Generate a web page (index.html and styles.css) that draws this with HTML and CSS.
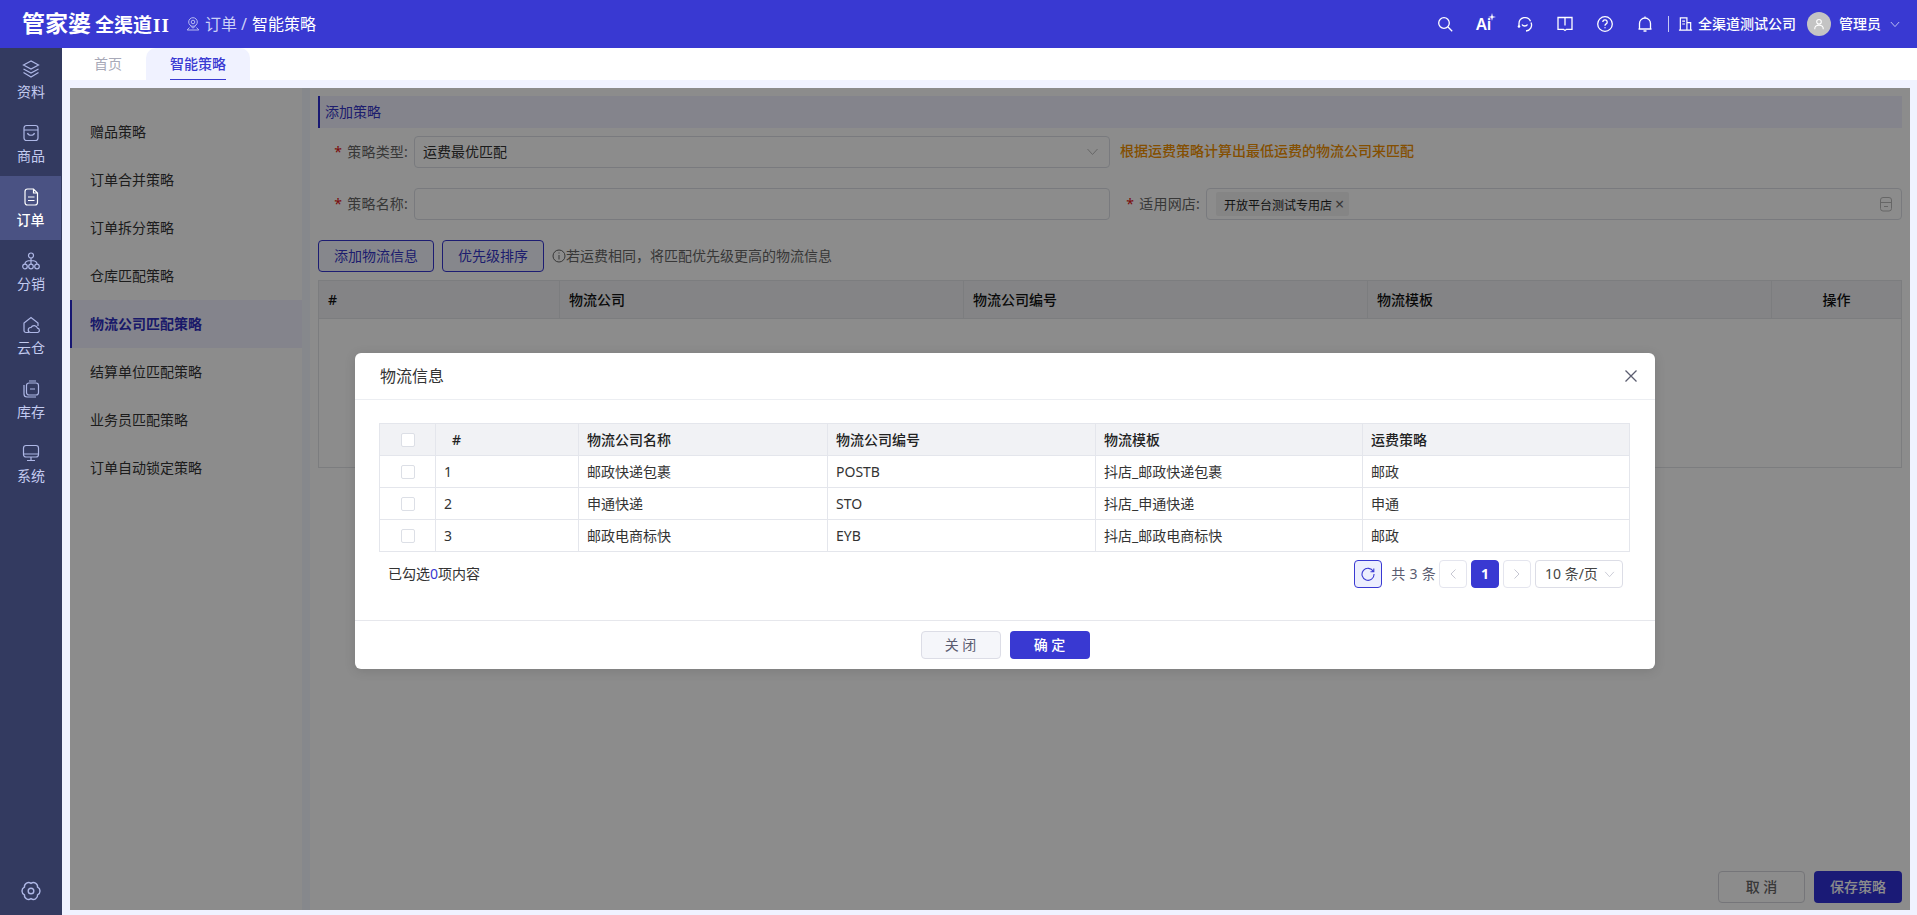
FILE: index.html
```html
<!DOCTYPE html>
<html lang="zh-CN">
<head>
    <meta charset="UTF-8">
    <meta name="viewport" content="width=device-width, initial-scale=1.0">
    <title>智能策略</title>
    <link rel="stylesheet" href="styles.css">
</head>
<body>
    <header class="topbar">
        <div class="logo"><span class="logo-main">管家婆</span><span class="logo-sub">全渠道</span><span class="logo-ver">II</span></div>
        <div class="crumb">
            <svg class="crumb-pin" viewBox="0 0 14 14"><circle cx="7" cy="5" r="4.3"/><circle cx="7" cy="5" r="1.8"/><path d="M4.5 9 7 11.2 9.5 9M3.5 10.5 1.2 13h11.6l-2.3-2.5"/></svg>
            <span class="crumb-parent">订单</span><span class="crumb-sep">/</span><span class="crumb-current">智能策略</span>
        </div>
        <div class="top-tools">
            <svg class="tool" viewBox="0 0 18 18"><circle cx="8" cy="8" r="5.3"/><path d="m12 12 4.2 4.2"/></svg>
            <span class="tool-ai">Ai<svg viewBox="0 0 10 10"><path class="fill" d="M5 0 6 4 10 5 6 6 5 10 4 6 0 5 4 4z"/></svg></span>
            <svg class="tool" viewBox="0 0 18 18"><path d="M3 11V8.500a6 6 0 0 1 11.500-2.300M15 7.500a6 6 0 0 1-5 8.500"/><path d="M6 9.500c1 2 4.500 2 5.500 0"/><circle class="fill" cx="3" cy="11.500" r="1.300"/></svg>
            <svg class="tool" viewBox="0 0 18 18"><path d="M2 2.500h14v11.800h-5.500L9 15.500l-1.500-1.200H2zM9 2.500v8"/></svg>
            <svg class="tool" viewBox="0 0 18 18"><circle cx="9" cy="9" r="7.300"/><path d="M6.800 7a2.200 2.200 0 1 1 3.400 1.900c-.8.500-1.200 1-1.200 1.900M9 12.300v1"/></svg>
            <svg class="tool" viewBox="0 0 18 18"><path d="M3.500 14V8.500a5.500 5.500 0 0 1 11 0V14zM2.500 14h13M7.500 16h3M9 1.500V3"/></svg>
            <span class="tool-line"></span>
            <svg class="tool-building" viewBox="0 0 16 16"><path d="M2.500 14.500V1.500h7v13M9.500 6.500h4v8M1 14.500h14M4.500 5h3M4.500 8h3"/></svg>
            <span class="company">全渠道测试公司</span>
            <span class="avatar"><svg viewBox="0 0 14 14"><circle cx="7" cy="4.500" r="2.700"/><path d="M2 13c0-6 10-6 10 0"/></svg></span>
            <span class="user">管理员</span>
            <svg class="tool-chevron" viewBox="0 0 12 8"><path d="m1 1 5 5.500L11 1"/></svg>
        </div>
    </header>

    <div class="shell">
        <nav class="sidebar">
            <a class="side-item"><svg viewBox="0 0 20 20"><path d="M10 2 2.500 6 10 10l7.500-4zM2.500 10 10 14l7.500-4M2.500 13.500 10 18l7.500-4.500"/></svg>资料</a>
            <a class="side-item"><svg viewBox="0 0 20 20"><rect x="3" y="2.500" width="14" height="15" rx="2.500"/><path d="M3 7h14M6.500 10c1 3 6 3 7 0"/></svg>商品</a>
            <a class="side-item active"><svg viewBox="0 0 20 20"><path d="M4 4.500a2.500 2.500 0 0 1 2.500-2.500h6l4 4v9.500a2.500 2.500 0 0 1-2.500 2.500h-7.500a2.500 2.500 0 0 1-2.500-2.500zM7 10h6.500M7 13.500h6.500M12.500 2.500v3.500h3.500"/></svg>订单</a>
            <a class="side-item"><svg viewBox="0 0 20 20"><circle cx="10" cy="4.500" r="2.500"/><circle cx="4" cy="15.500" r="2.300"/><circle cx="10" cy="15.500" r="2.300"/><circle cx="16" cy="15.500" r="2.300"/><path d="M10 7v6M4 13c0-3 2-3.500 6-3.500s6 .5 6 3.500"/></svg>分销</a>
            <a class="side-item"><svg viewBox="0 0 20 20"><path d="M8 17.500H5a2 2 0 0 1-2-2V8l7-5.500L17 8v3"/><path d="M9.500 17.500a2.500 2.500 0 0 1 .5-5 3.500 3.500 0 0 1 6.500.7 2.200 2.200 0 0 1 .3 4.300z"/></svg>云仓</a>
            <a class="side-item"><svg viewBox="0 0 20 20"><path d="M3 6v9a3 3 0 0 0 3 3h9"/><rect x="5.500" y="4" width="12" height="12" rx="2.500"/><path d="M8 2h7M9 10h5"/></svg>库存</a>
            <a class="side-item"><svg viewBox="0 0 20 20"><rect x="2.500" y="2.500" width="15" height="11.500" rx="2.500"/><path d="M3 11h14M10 14v3M6 17.500h8"/></svg>系统</a>
            <a class="side-gear"><svg viewBox="0 0 20 20"><path d="M10 2.400A4.200 4.200 0 0 1 16.600 6.200 4.200 4.200 0 0 1 16.600 13.800 4.200 4.200 0 0 1 10 17.600 4.200 4.200 0 0 1 3.400 13.800 4.200 4.200 0 0 1 3.400 6.200 4.200 4.200 0 0 1 10 2.400z"/><circle cx="10" cy="10" r="2.800"/></svg></a>
        </nav>

        <div class="main">
            <div class="tabs">
                <a class="tab">首页</a>
                <a class="tab tab-on"><span>智能策略</span></a>
            </div>
            <div class="content">
                <div class="frame">
                    <ul class="menu">
                        <li>赠品策略</li>
                        <li>订单合并策略</li>
                        <li>订单拆分策略</li>
                        <li>仓库匹配策略</li>
                        <li class="menu-on">物流公司匹配策略</li>
                        <li>结算单位匹配策略</li>
                        <li>业务员匹配策略</li>
                        <li>订单自动锁定策略</li>
                    </ul>
                    <section class="panel">
                        <div class="panel-title">添加策略</div>
                        <div class="form-grid">
                            <div class="form-item">
                                <label class="form-label"><i>*</i>策略类型:</label>
                                <div class="field field-select">运费最优匹配
                                    <svg viewBox="0 0 12 8"><path d="m1 1 5 5.500L11 1"/></svg>
                                </div>
                            </div>
                            <div class="form-hint">根据运费策略计算出最低运费的物流公司来匹配</div>
                            <div class="form-item">
                                <label class="form-label"><i>*</i>策略名称:</label>
                                <div class="field"></div>
                            </div>
                            <div class="form-item">
                                <label class="form-label"><i>*</i>适用网店:</label>
                                <div class="field field-tags">
                                    <span class="tag">开放平台测试专用店<b>×</b></span>
                                    <svg viewBox="0 0 14 16"><path d="M1.500 6V4a2.500 2.500 0 0 1 2.500-2.500h6A2.500 2.500 0 0 1 12.500 4v2M1 6.500h12M1.500 7v5.500A2.500 2.500 0 0 0 4 15h6a2.500 2.500 0 0 0 2.500-2.500V7M5 10.500h4"/></svg>
                                </div>
                            </div>
                        </div>
                        <div class="actions">
                            <button class="btn-line btn-add">添加物流信息</button>
                            <button class="btn-line btn-sort">优先级排序</button>
                            <span class="tip"><svg viewBox="0 0 14 14"><circle cx="7" cy="7" r="6"/><path d="M7 6v4.500M7 3.500v1"/></svg>若运费相同，将匹配优先级更高的物流信息</span>
                        </div>
                        <table class="grid-bg">
                            <colgroup><col class="bg-c1"><col class="bg-c2"><col class="bg-c2"><col class="bg-c2"><col></colgroup>
                            <thead><tr><th>#</th><th>物流公司</th><th>物流公司编号</th><th>物流模板</th><th class="center">操作</th></tr></thead>
                            <tbody><tr class="empty-row"><td colspan="5"></td></tr></tbody>
                        </table>
                        <div class="panel-foot">
                            <button class="btn-cancel">取 消</button>
                            <button class="btn-save">保存策略</button>
                        </div>
                    </section>

                    <div class="mask">
                        <div class="modal">
                            <div class="modal-head">
                                <span>物流信息</span>
                                <svg viewBox="0 0 14 14"><path d="m1.500 1.500 11 11M12.500 1.500l-11 11"/></svg>
                            </div>
                            <div class="modal-body">
                                <table class="grid">
                                    <colgroup><col class="m-c1"><col class="m-c2"><col class="m-c3"><col class="m-c4"><col class="m-c5"><col></colgroup>
                                    <thead>
                                        <tr><th class="check"><span class="box"></span></th><th class="num">#</th><th>物流公司名称</th><th>物流公司编号</th><th>物流模板</th><th>运费策略</th></tr>
                                    </thead>
                                    <tbody>
                                        <tr><td class="check"><span class="box"></span></td><td>1</td><td>邮政快递包裹</td><td>POSTB</td><td>抖店_邮政快递包裹</td><td>邮政</td></tr>
                                        <tr><td class="check"><span class="box"></span></td><td>2</td><td>申通快递</td><td>STO</td><td>抖店_申通快递</td><td>申通</td></tr>
                                        <tr><td class="check"><span class="box"></span></td><td>3</td><td>邮政电商标快</td><td>EYB</td><td>抖店_邮政电商标快</td><td>邮政</td></tr>
                                    </tbody>
                                </table>
                                <div class="table-foot">
                                    <span class="checked">已勾选<em>0</em>项内容</span>
                                    <div class="pager">
                                        <span class="page-btn page-refresh"><svg viewBox="0 0 14 14"><path d="M12.300 4.500A6 6 0 1 0 13 7M12.800 1.500v3.300H9.500"/></svg></span>
                                        <span class="page-total">共 3 条</span>
                                        <span class="page-btn"><svg viewBox="0 0 8 12"><path d="M6.500 1.500 2 6l4.500 4.500"/></svg></span>
                                        <span class="page-btn page-on">1</span>
                                        <span class="page-btn"><svg viewBox="0 0 8 12"><path d="M1.500 1.500 6 6l-4.500 4.500"/></svg></span>
                                        <span class="page-size">10 条/页<svg viewBox="0 0 12 8"><path d="m1 1 5 5.500L11 1"/></svg></span>
                                    </div>
                                </div>
                            </div>
                            <div class="modal-foot">
                                <button class="btn-close">关 闭</button>
                                <button class="btn-ok">确 定</button>
                            </div>
                        </div>
                    </div>
                </div>
            </div>
        </div>
    </div>
</body>
</html>
```

FILE: styles.css
```css
* { box-sizing: border-box; }
html, body { height: 100%; }
body { margin: 0; overflow: hidden; font-family: "Noto Sans", "Noto Sans CJK SC", sans-serif; font-size: 14px; line-height: 20px; color: #333; background: #f0f2ff; }
svg { fill: none; stroke: currentColor; stroke-width: 1.3; display: block; flex: none; }
svg .fill { fill: currentColor; stroke: none; }
button { font: inherit; cursor: pointer; padding: 0; }
table { border-collapse: collapse; table-layout: fixed; width: 100%; }
th { text-align: left; font-weight: 500; }

/* top bar */
.topbar { height: 48px; background: #3939d2; color: #fff; display: flex; align-items: center; }
.logo { width: 186px; padding-left: 22px; display: flex; align-items: baseline; font-weight: 700; white-space: nowrap; }
.logo-main { font-size: 23px; line-height: 30px; }
.logo-sub { font-size: 19px; margin-left: 4px; line-height: 30px; }
.logo-ver { font-family: "Liberation Serif", serif; font-size: 19px; margin-left: 1px; letter-spacing: 1px; }
.crumb { display: flex; align-items: center; font-size: 16px; }
.crumb-pin { width: 14px; height: 14px; color: #c5c8f5; stroke-width: .9; margin-right: 5px; }
.crumb-parent { color: #ccd0f7; }
.crumb-sep { color: #ccd0f7; margin: 0 5px 0 4px; }
.top-tools { margin-left: auto; display: flex; align-items: center; padding-right: 17px; }
.tool { width: 18px; height: 18px; margin-right: 22px; }
.tool-ai { width: 18px; margin-right: 22px; font-size: 16px; font-weight: 600; position: relative; line-height: 18px; }
.tool-ai svg { width: 8px; height: 8px; stroke: none; fill: #fff; position: absolute; right: -2px; top: -2px; }
.tool-ai svg path { fill: #fff; }
.tool-line { width: 1px; height: 16px; background: #c5c8f5; margin-right: 9px; margin-left: -8px; }
.tool-building { width: 15px; height: 16px; margin-right: 5px; }
.company { font-weight: 500; margin-right: 11px; }
.avatar { width: 24px; height: 24px; border-radius: 50%; background: #c4c4c4; display: flex; align-items: center; justify-content: center; margin-right: 8px; }
.avatar svg { width: 12px; height: 12px; }
.user { font-weight: 500; margin-right: 9px; }
.tool-chevron { width: 10px; height: 7px; stroke-width: 1; color: #d5d7f7; }

/* page frame */
.shell { display: flex; height: 867px; }
.sidebar { width: 62px; background: #333a60; display: flex; flex-direction: column; flex: none; }
.side-item { height: 64px; display: flex; flex-direction: column; align-items: center; padding-top: 11px; color: #c3cbf0; font-size: 14px; line-height: 20px; }
.side-item svg { width: 20px; height: 20px; margin-bottom: 3px; stroke-width: 1.2; color: #aeb7e6; }
.side-item.active { background: #4a5283; color: #fff; font-weight: 500; margin-right: 1px; }
.side-item.active svg { color: #fff; }
.side-gear { margin-top: auto; padding: 0 0 14px; display: flex; justify-content: center; color: #aeb7e6; }
.side-gear svg { width: 20px; height: 20px; stroke-width: 1.4; }

.main { flex: 1; min-width: 0; display: flex; flex-direction: column; }
.tabs { height: 32px; background: #fff; padding-left: 8px; display: flex; }
.tab { width: 76px; text-align: center; line-height: 32px; color: #a8a9b8; }
.tab-on { width: 104px; background: #f0f2ff; border-radius: 10px 10px 0 0; color: #3939d2; font-weight: 500; }
.tab-on span { display: inline-block; height: 32px; border-bottom: 1px solid #3939d2; }
.content { flex: 1; padding: 8px 7px 5px 8px; min-height: 0; }
.frame { position: relative; height: 100%; display: flex; background: #f5f7ff; }

/* strategy menu */
.menu { width: 232px; flex: none; background: #fff; margin: 0 8px 0 0; padding: 20px 0 0; list-style: none; }
.menu li { height: 48px; line-height: 48px; padding-left: 20px; color: #333; }
.menu .menu-on { background: #f0f0ff; border-left: 2px solid #2a2ad0; padding-left: 18px; color: #2f2fc0; font-weight: 700; }

/* strategy form */
.panel { flex: 1; min-width: 0; background: #fff; padding: 8px 8px 7px; display: flex; flex-direction: column; }
.panel-title { height: 32px; line-height: 31px; background: #f0f0ff; border-left: 2px solid #2f2fd0; padding-left: 5px; color: #3636c8; }
.form-grid { display: grid; grid-template-columns: 792px 1fr; row-gap: 20px; margin-top: 8px; }
.form-item { display: flex; }
.form-label { width: 96px; flex: none; padding-right: 6px; text-align: right; line-height: 32px; color: #666; white-space: nowrap; letter-spacing: .2px; }
.form-label i { color: #e01010; font-style: normal; margin-right: 5px; }
.form-hint { padding-left: 10px; line-height: 30px; color: #f09000; font-weight: 500; }
.field { flex: 1; height: 32px; border: 1px solid #dcdfe6; border-radius: 4px; background: #fff; display: flex; align-items: center; justify-content: space-between; }
.field-select { padding: 0 10px 0 8px; }
.field-select svg { width: 13px; height: 8px; color: #bbb; stroke-width: 1; }
.field-tags { padding: 0 8px 0 9px; }
.field-tags svg { width: 14px; height: 16px; color: #bbb; stroke-width: 1; }
.tag { height: 24px; line-height: 24px; padding: 0 5px 0 8px; background: #f2f2f2; border-radius: 2px; font-size: 12px; color: #222; }
.tag b { font-weight: 400; margin-left: 3px; color: #666; font-size: 16px; }

.actions { display: flex; align-items: center; margin-top: 20px; }
.btn-line { height: 32px; border: 1px solid #3636d0; border-radius: 4px; background: #f5f6ff; color: #3636c8; }
.btn-add { width: 116px; margin-right: 8px; }
.btn-sort { width: 102px; margin-right: 8px; }
.tip { display: flex; align-items: center; color: #666; }
.tip svg { width: 14px; height: 14px; stroke-width: 1; }

.grid-bg { margin-top: 8px; border: 1px solid #e2e3e8; }
.bg-c1 { width: 241px; }
.bg-c2 { width: 404px; }
.grid-bg th { height: 38px; padding: 0 9px; background: #f0f1f5; border-right: 1px solid #e2e3e8; border-bottom: 1px solid #e2e3e8; color: #111; }
.grid-bg th.center { text-align: center; }
.empty-row td { height: 149px; }
.panel-foot { margin-top: auto; display: flex; justify-content: flex-end; gap: 9px; }
.btn-cancel { width: 87px; height: 32px; border: 1px solid #d5d6dc; border-radius: 4px; background: #fff; color: #666; font-weight: 500; }
.btn-save { width: 88px; height: 32px; border: 0; border-radius: 4px; background: #3030d8; color: #fff; font-weight: 500; }

/* dialog */
.mask { position: absolute; inset: 0; background: rgba(0, 0, 0, .45); display: flex; justify-content: center; align-items: flex-start; padding: 265px 0 0 30px; }
.modal { width: 1300px; background: #fff; border-radius: 6px; overflow: hidden; box-shadow: 0 2px 12px rgba(0, 0, 0, .12); }
.modal-head { height: 47px; padding: 0 17px 0 25px; border-bottom: 1px solid #eceef2; display: flex; align-items: center; justify-content: space-between; font-size: 16px; color: #333; }
.modal-head svg { width: 14px; height: 14px; color: #5b5d70; }
.modal-body { padding: 23px 25px 32px 24px; }
.grid th, .grid td { height: 32px; padding: 0 0 0 8px; border: 1px solid #e4e6ec; white-space: nowrap; color: #333; }
.grid th { background: #f1f2f5; color: #222; }
.grid th.check, .grid td.check { padding: 0; text-align: center; }
.grid th.num { padding-left: 16px; }
.m-c1 { width: 56px; }
.m-c2 { width: 143px; }
.m-c3 { width: 249px; }
.m-c4 { width: 268px; }
.m-c5 { width: 267px; }
.box { display: block; width: 14px; height: 14px; margin: 0 auto; border: 1px solid #dcdfe6; border-radius: 2px; background: #fff; }

.table-foot { margin-top: 8px; display: flex; justify-content: space-between; align-items: center; padding: 0 7px 0 9px; }
.checked em { font-style: normal; color: #3939d2; }
.pager { display: flex; align-items: center; gap: 4px; color: #5a5c70; }
.page-btn { width: 28px; height: 28px; border: 1px solid #e4e5ee; border-radius: 4px; display: flex; align-items: center; justify-content: center; color: #c6c7d2; }
.page-btn svg { width: 8px; height: 12px; stroke-width: 1; }
.page-refresh { background: #eceefe; border-color: #3939d2; color: #3939d2; margin-right: 5px; }
.page-refresh svg { width: 14px; height: 14px; stroke-width: 1.1; }
.page-total { margin-right: -1px; letter-spacing: .3px; }
.page-on { background: #3939d2; border-color: #3939d2; color: #fff; font-weight: 700; }
.page-size { width: 88px; height: 28px; border: 1px solid #dcdde6; border-radius: 4px; display: flex; align-items: center; justify-content: space-between; padding: 0 7px 0 9px; color: #444; }
.page-size svg { width: 11px; height: 7px; stroke-width: 1; color: #c6c7d2; }

.modal-foot { height: 49px; border-top: 1px solid #e6e7ec; display: flex; justify-content: center; gap: 9px; padding-top: 10px; }
.btn-close { width: 80px; height: 28px; border: 1px solid #dcdde6; border-radius: 4px; background: #f5f6fa; color: #5a5c70; }
.btn-ok { width: 80px; height: 28px; border: 0; border-radius: 4px; background: #3939d2; color: #fff; font-weight: 500; }
```
